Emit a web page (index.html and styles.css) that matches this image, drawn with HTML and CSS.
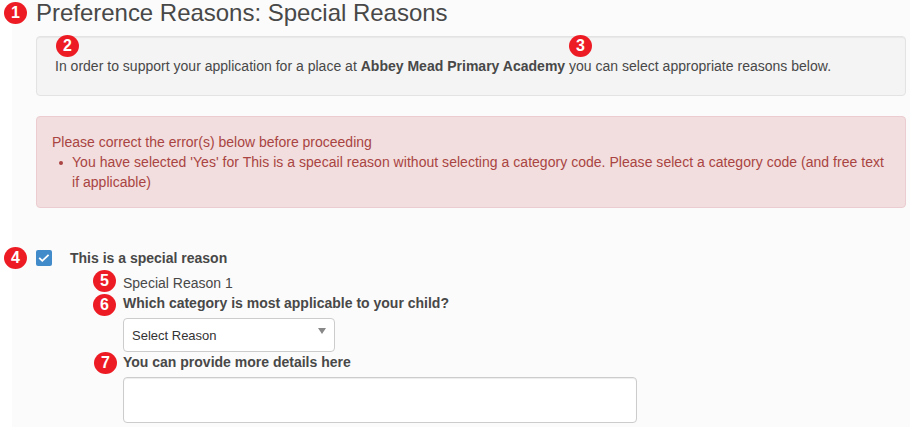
FILE: index.html
```html
<!DOCTYPE html>
<html lang="en">
<head>
    <meta charset="UTF-8"/>
    <title>Preference Reasons</title>
    <link rel="stylesheet" href="styles.css">
</head>
<body>
    <div class="page">
        <h1>Preference Reasons: Special Reasons</h1>

        <div class="well">
            In order to support your application for a place at <b>Abbey Mead Primary Academy</b> you can select appropriate reasons below.
        </div>

        <div class="alert">
            <div>Please correct the error(s) below before proceeding</div>
            <ul>
                <li>You have selected 'Yes' for This is a specail reason without selecting a category code. Please select a category code (and free text if applicable)</li>
            </ul>
        </div>

        <div class="reason">
            <div class="check">
                <svg width="16" height="16" viewBox="0 0 16 16"><path d="M3.2 7.8 L6.3 10.8 L12.6 4.8" fill="none" stroke="#fff" stroke-width="1.8"/></svg>
            </div>
            <div class="label">This is a special reason</div>
        </div>

        <div class="details">
            <div class="desc">Special Reason 1</div>
            <div class="label">Which category is most applicable to your child?</div>
            <div class="select">
                <span>Select Reason</span>
                <i class="arrow"></i>
            </div>
            <div class="label">You can provide more details here</div>
            <textarea class="free-text"></textarea>
        </div>
    </div>

    <!-- numbered callouts -->
    <div class="mark mark1">1</div>
    <div class="mark mark2">2</div>
    <div class="mark mark3">3</div>
    <div class="mark mark4">4</div>
    <div class="mark mark5">5</div>
    <div class="mark mark6">6</div>
    <div class="mark mark7">7</div>
</body>
</html>
```
FILE: styles.css
```css
* {
    box-sizing: border-box;
}

body {
    margin: 0px;
    height: 427px;
    overflow: hidden;
    position: relative;
    font-family: "Liberation Sans", Arial, sans-serif;
    font-size: 14px;
    line-height: 20px;
    color: #484848;
    background-color: #fff;
}

.page {
    height: 427px;
    margin-left: 12px;
    padding: 0px 4px 0px 24px;
    background-color: #fbfbfb;
}

h1 {
    margin: 0px;
    height: 36px;
    font-size: 24px;
    font-weight: normal;
    line-height: 26px;
    letter-spacing: -0.02px;
}

.well {
    height: 60px;
    padding: 19px 18px;
    letter-spacing: 0.012px;
    border: solid 1px #e3e3e3;
    border-radius: 4px;
    background-color: #f4f4f4;
    box-shadow: inset 0 1px 1px rgba(0,0,0,0.05);
}

.alert {
    height: 92px;
    margin-top: 20px;
    padding: 15px 14px 15px 15px;
    color: #a94442;
    border: solid 1px #ebccd1;
    border-radius: 4px;
    background-color: #f2dede;
}

.alert ul {
    margin: 0px;
    padding: 0px 0px 0px 20px;
    letter-spacing: 0.03px;
    list-style: none;
}

.alert li::before {
    content: "";
    float: left;
    width: 4px;
    height: 4px;
    margin: 9px 0px 0px -13px;
    border-radius: 2px;
    background-color: #a94442;
}

.reason {
    display: flex;
    margin-top: 40px;
}

.check {
    width: 16px;
    height: 16px;
    margin: 2px 18px 0px 0px;
    border-radius: 2px;
    background-color: #428bca;
}

.check svg {
    display: block;
}

.label {
    font-weight: bold;
}

.details {
    padding: 5px 0px 0px 87px;
}

.select {
    display: flex;
    justify-content: space-between;
    width: 212px;
    height: 34px;
    margin-top: 5px;
    padding: 7px 8px 0px 8px;
    font-size: 13px;
    color: #333;
    border: solid 1px #ccc;
    border-radius: 4px;
    background-color: #fff;
}

.arrow {
    height: 0px;
    margin-top: 2px;
    border-top: solid 6px #888;
    border-left: solid 4px transparent;
    border-right: solid 4px transparent;
}

.free-text {
    display: block;
    width: 514px;
    height: 46px;
    margin-top: 5px;
    border: solid 1px #ccc;
    border-radius: 4px;
    resize: none;
    background-color: #fff;
    box-shadow: inset 0 1px 1px rgba(0,0,0,0.075);
}

.mark {
    position: absolute;
    width: 23px;
    height: 22px;
    color: #fff;
    font-weight: bold;
    font-size: 16px;
    line-height: 22px;
    text-align: center;
    border-radius: 50%;
    background-color: #ed1c24;
}
.mark1 {left: 4px; top: 2px; }
.mark2 {left: 56px; top: 35px; }
.mark3 {left: 569px; top: 35px; }
.mark4 {left: 4px; top: 247px; }
.mark5 {left: 93px; top: 270px; }
.mark6 {left: 93px; top: 294px; }
.mark7 {left: 94px; top: 352px; }
```
